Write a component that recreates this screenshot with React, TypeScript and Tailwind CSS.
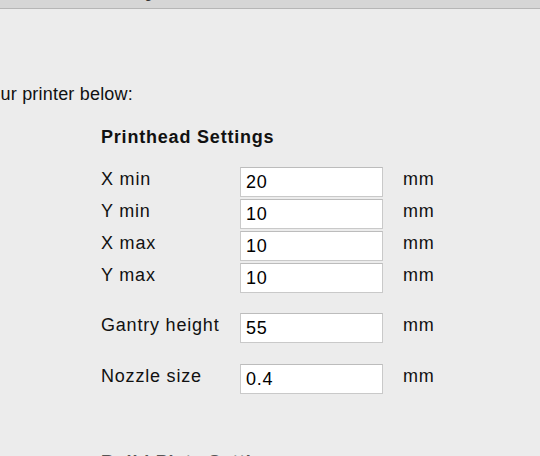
import React from "react";

const AXIS_ROWS = [
  { label: "X min", value: "20" },
  { label: "Y min", value: "10" },
  { label: "X max", value: "10" },
  { label: "Y max", value: "10" },
];

function Row({ label, value, className = "" }: { label: string; value: string; className?: string }) {
  return (
    <div className={"flex items-start " + className}>
      <div className="w-[139px] shrink-0 pt-[2px] leading-[20px]">{label}</div>
      <input
        readOnly
        defaultValue={value}
        className="h-[30px] w-[143px] shrink-0 border border-[#c9c9c9] border-t-[#bcbcbc] bg-white pl-[5px] text-[18px] leading-[20px] text-black outline-none"
      />
      <div className="ml-[20px] pt-[2px] leading-[20px]">mm</div>
    </div>
  );
}

export default function App() {
  return (
    <div className="h-[456px] w-[540px] overflow-hidden bg-[#ececec] font-['Liberation_Sans',Arial,sans-serif] text-[18px] tracking-[0.8px] text-[#111]">
      {/* window title bar, mostly scrolled out of view */}
      <div className="h-[9px] overflow-hidden border-b border-[#b6b6b6] bg-[#d6d6d6]">
        <div className="-mt-[15px] pl-[52px] text-[14px] leading-[16px] tracking-normal text-[#333]">
          Machine Settings
        </div>
      </div>

      <div className="mt-[75px] flex w-[133px] justify-end leading-[20px] tracking-[0.2px]">
        <span className="shrink-0 whitespace-nowrap">Please enter the settings for your printer below:</span>
      </div>

      <div className="ml-[101px] mt-[23px] flex flex-col">
        <h2 className="font-bold leading-[20px]">Printhead Settings</h2>

        <div className="mt-[20px] flex flex-col gap-[2px]">
          {AXIS_ROWS.map((r) => (
            <Row key={r.label} label={r.label} value={r.value} />
          ))}
        </div>

        <Row label="Gantry height" value="55" className="mt-[20px]" />
        <Row label="Nozzle size" value="0.4" className="mt-[21px]" />

        <h2 className="mt-[58px] font-bold leading-[20px] text-[#555]">Build Plate Settings</h2>
      </div>
    </div>
  );
}
